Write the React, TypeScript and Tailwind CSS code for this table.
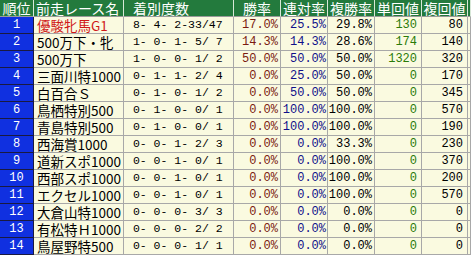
import React from 'react';

type Row = {
  rank: number;
  name: string;
  counts: string;
  win: string;
  ren: string;
  fuku: string;
  tan: string;
  fukuKai: string;
};

const rows: Row[] = [
  { rank: 1, name: '優駿牝馬G1', counts: ' 8- 4- 2-33/47', win: '17.0%', ren: '25.5%', fuku: '29.8%', tan: '130', fukuKai: '80' },
  { rank: 2, name: '500万下・牝', counts: ' 1- 0- 1- 5/ 7', win: '14.3%', ren: '14.3%', fuku: '28.6%', tan: '174', fukuKai: '140' },
  { rank: 3, name: '500万下', counts: ' 1- 0- 0- 1/ 2', win: '50.0%', ren: '50.0%', fuku: '50.0%', tan: '1320', fukuKai: '320' },
  { rank: 4, name: '三面川特1000', counts: ' 0- 1- 1- 2/ 4', win: '0.0%', ren: '25.0%', fuku: '50.0%', tan: '0', fukuKai: '170' },
  { rank: 5, name: '白百合Ｓ', counts: ' 0- 1- 0- 1/ 2', win: '0.0%', ren: '50.0%', fuku: '50.0%', tan: '0', fukuKai: '345' },
  { rank: 6, name: '鳥栖特別500', counts: ' 0- 1- 0- 0/ 1', win: '0.0%', ren: '100.0%', fuku: '100.0%', tan: '0', fukuKai: '570' },
  { rank: 7, name: '青島特別500', counts: ' 0- 1- 0- 0/ 1', win: '0.0%', ren: '100.0%', fuku: '100.0%', tan: '0', fukuKai: '190' },
  { rank: 8, name: '西海賞1000', counts: ' 0- 0- 1- 2/ 3', win: '0.0%', ren: '0.0%', fuku: '33.3%', tan: '0', fukuKai: '230' },
  { rank: 9, name: '道新スポ1000', counts: ' 0- 0- 1- 0/ 1', win: '0.0%', ren: '0.0%', fuku: '100.0%', tan: '0', fukuKai: '370' },
  { rank: 10, name: '西部スポ1000', counts: ' 0- 0- 1- 0/ 1', win: '0.0%', ren: '0.0%', fuku: '100.0%', tan: '0', fukuKai: '200' },
  { rank: 11, name: 'エクセル1000', counts: ' 0- 0- 1- 0/ 1', win: '0.0%', ren: '0.0%', fuku: '100.0%', tan: '0', fukuKai: '570' },
  { rank: 12, name: '大倉山特1000', counts: ' 0- 0- 0- 3/ 3', win: '0.0%', ren: '0.0%', fuku: '0.0%', tan: '0', fukuKai: '0' },
  { rank: 13, name: '有松特Ｈ1000', counts: ' 0- 0- 0- 2/ 2', win: '0.0%', ren: '0.0%', fuku: '0.0%', tan: '0', fukuKai: '0' },
  { rank: 14, name: '鳥屋野特500', counts: ' 0- 0- 0- 1/ 1', win: '0.0%', ren: '0.0%', fuku: '0.0%', tan: '0', fukuKai: '0' },
];

const cols = 'grid grid-cols-[34px_90px_110px_47px_47px_47px_47px_46px_3px]';
const head = 'h-[17px] flex items-center bg-[#237a3d] text-white border-r border-b border-r-[#d8e8d8] border-b-[#9a9a9a] text-[14px] leading-[16px]';
const cell = 'h-[17px] flex items-center bg-[#fafae0] border-r border-b border-[#a8a8a8] leading-[16px]';
const mono = "font-['Liberation_Mono',monospace] whitespace-pre";
const jp = "font-['Noto_Sans_CJK_JP',sans-serif]";

const App: React.FC = () => {
  return (
    <div className="w-[471px] h-[258px] overflow-hidden bg-white">
      <div className={`${cols} ${jp}`}>
        <div className={`${head} justify-center`}>順位</div>
        <div className={`${head} pl-[2px]`}>前走レース名</div>
        <div className={`${head} pl-[9px] bg-[#5fe23c] text-black`}>着別度数</div>
        <div className={`${head} justify-center`}>勝率</div>
        <div className={`${head} justify-center`}>連対率</div>
        <div className={`${head} justify-center`}>複勝率</div>
        <div className={`${head} justify-center`}>単回値</div>
        <div className={`${head} justify-center`}>複回値</div>
        <div className={head} />
      </div>

      {rows.map((r) => (
        <div key={r.rank} className={cols}>
          <div className={`h-[17px] flex items-center justify-center bg-[#1030e0] text-white border-r border-b border-[#1a1a40] leading-[16px] text-[12px] ${mono}`}>
            {r.rank}
          </div>
          <div className={`${cell} pl-[3px] text-[13.5px] ${jp} ${r.rank === 1 ? 'text-[#d01818]' : 'text-black'}`}>
            {r.name}
          </div>
          <div className={`${cell} pl-[2px] text-black text-[11.5px] ${mono}`}>{r.counts}</div>
          <div className={`${cell} justify-end pr-[2px] text-[#7a1a10] text-[12px] ${mono}`}>{r.win}</div>
          <div className={`${cell} justify-end pr-[1px] text-[#10108a] text-[12px] ${mono}`}>{r.ren}</div>
          <div className={`${cell} justify-end pr-[2px] text-black text-[12px] ${mono}`}>{r.fuku}</div>
          <div className={`${cell} justify-end pr-[4px] text-[#2a7a08] text-[12px] ${mono}`}>{r.tan}</div>
          <div className={`${cell} justify-end pr-[4px] text-black text-[12px] ${mono}`}>{r.fukuKai}</div>
          <div className={cell} />
        </div>
      ))}
    </div>
  );
};

export default App;
